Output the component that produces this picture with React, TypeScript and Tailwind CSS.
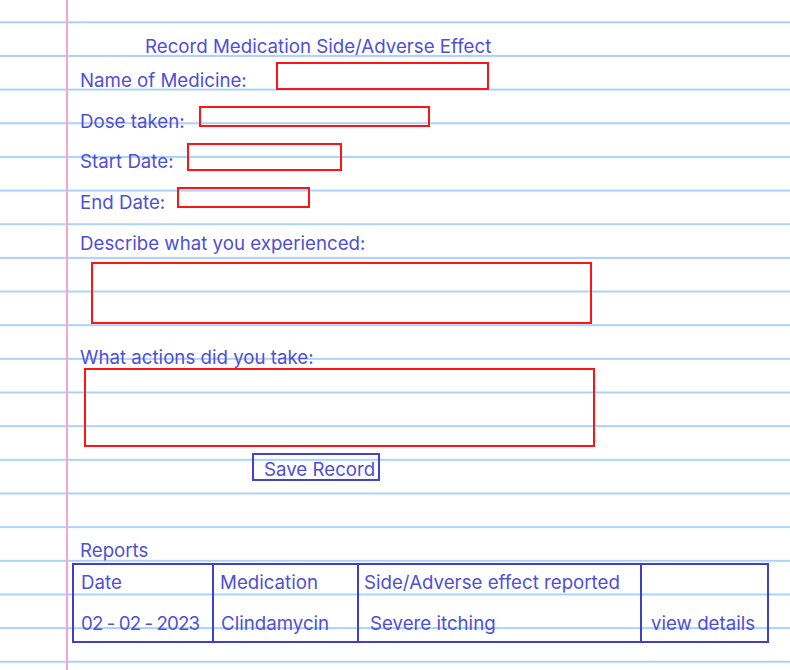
const fields = [
  { label: "Name of Medicine:", labelW: "w-[196px]", box: "mt-[1px] w-[213px] h-[28px]" },
  { label: "Dose taken:", labelW: "w-[119px]", box: "mt-[4.5px] w-[231px] h-[21px]" },
  { label: "Start Date:", labelW: "w-[107px]", box: "mt-[1px] w-[155px] h-[28px]" },
  { label: "End Date:", labelW: "w-[97px]", box: "mt-[4.5px] w-[133px] h-[21px]" },
];

function FieldRow({ label, labelW, box, first }: { label: string; labelW: string; box: string; first?: boolean }) {
  return (
    <div className={`flex h-[30px] items-start ${first ? "mt-[2.3px]" : "mt-[10.5px]"}`}>
      <span className={`mt-[8px] h-[22px] shrink-0 ${labelW}`}>{label}</span>
      <input className={`shrink-0 border-2 border-[#ff1414] bg-transparent outline-none ${box}`} />
    </div>
  );
}

export default function App() {
  return (
    <div className="min-h-screen w-full bg-white bg-[linear-gradient(90deg,transparent_66px,#f8a4cf_66px,#f8a4cf_68px,transparent_68px),linear-gradient(#acd1fb_2px,transparent_2px)] bg-[length:100%_100%,100%_33.67px] bg-[position:0_0,0_21.3px] pl-[72px] pt-[35px] font-['Inter',sans-serif] text-[18.7px] leading-6 text-[#4f4fd6]">
      <div className="flex flex-col pl-2">
        <h1 className="ml-[65px] h-6 font-normal">Record Medication Side/Adverse Effect</h1>

        {fields.map((f, i) => (
          <FieldRow key={f.label} {...f} first={i === 0} />
        ))}

        <p className="mt-[19.6px] h-[22px]">Describe what you experienced:</p>
        <textarea className="ml-[11px] mt-[7.8px] h-[62px] w-[501px] resize-none self-start border-2 border-[#ff1414] bg-transparent outline-none" />

        <p className="mt-[21.6px] h-[22px]">What actions did you take:</p>
        <textarea className="ml-[4px] mt-[0.4px] h-[79px] w-[511px] resize-none self-start border-2 border-[#ff1414] bg-transparent outline-none" />

        <button className="ml-[172px] mt-[5.7px] h-[28px] w-[128px] self-start overflow-hidden whitespace-nowrap border-2 border-[#4343cc] pl-[10px] text-left leading-[30px] text-[#4f4fd6]">
          Save Record
        </button>

        <p className="mt-[58.2px] h-[22px]">Reports</p>
      </div>

      <div className="mt-[1.5px] grid w-[697px] grid-cols-[138px_145px_283px_1fr] grid-rows-[38px_38.6px] border-2 border-[#3f3fcc]">
        <div className="pl-[7px] pt-[6.5px]">Date</div>
        <div className="border-l-2 border-[#3f3fcc] pl-[6px] pt-[6.5px]">Medication</div>
        <div className="border-l-2 border-[#3f3fcc] pl-[5px] pt-[6.5px]">Side/Adverse effect reported</div>
        <div className="border-l-2 border-[#3f3fcc]" />

        <div className="whitespace-nowrap pl-[7px] pt-[9.5px] tracking-[-0.9px]">02 - 02 - 2023</div>
        <div className="border-l-2 border-[#3f3fcc] pl-[7px] pt-[9.5px]">Clindamycin</div>
        <div className="border-l-2 border-[#3f3fcc] pl-[11px] pt-[9.5px]">Severe itching</div>
        <div className="whitespace-nowrap border-l-2 border-[#3f3fcc] pl-[9px] pt-[9.5px]">view details</div>
      </div>
    </div>
  );
}
